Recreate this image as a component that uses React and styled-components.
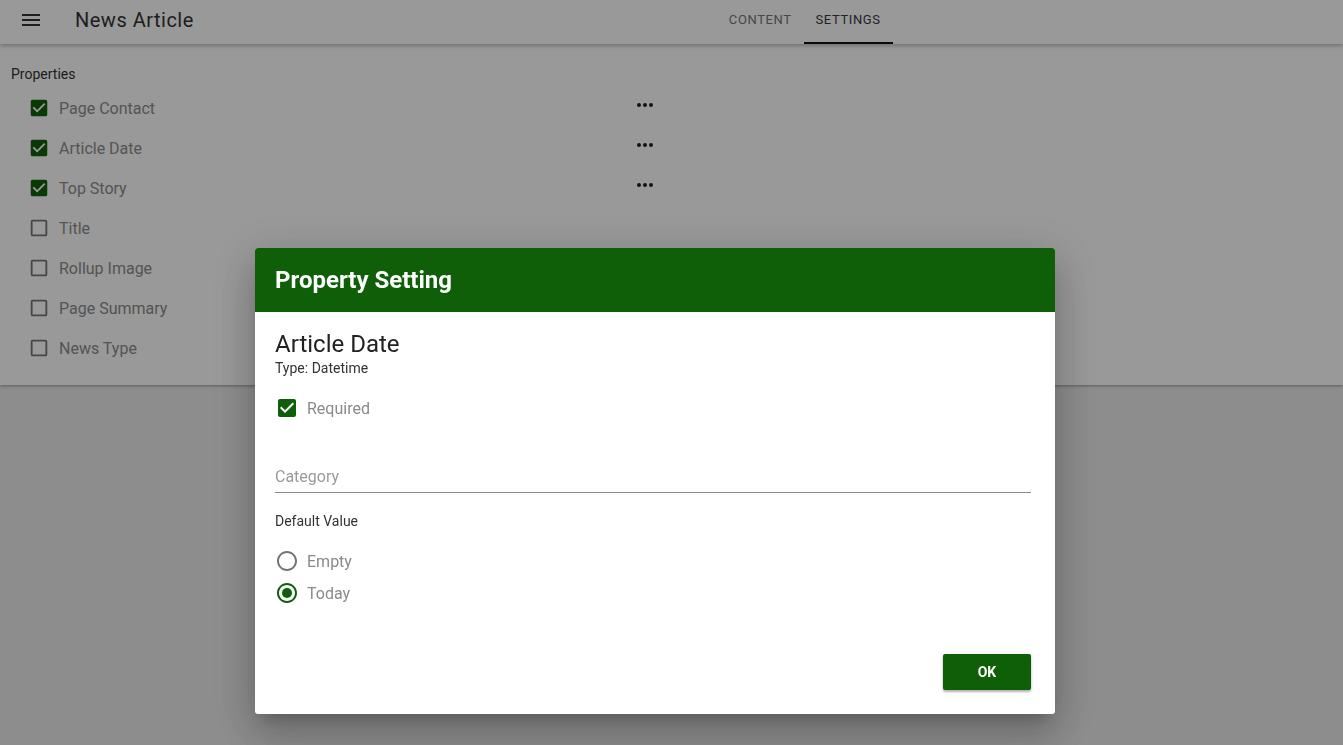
import React from 'react'
import styled, { createGlobalStyle } from 'styled-components'

const GlobalStyle = createGlobalStyle`
  html, body {
    margin: 0;
    padding: 0;
    background: #ebebeb;
    font-family: Roboto, "Liberation Sans", sans-serif;
  }
`

const GREEN = '#0f5f08'

const Page = styled.div`
  width: 1343px;
  height: 745px;
  overflow: hidden;
  background: #ebebeb;
`

const AppBar = styled.header`
  height: 44px;
  display: flex;
  align-items: center;
  background: #fff;
  box-shadow: 0 2px 4px rgba(0, 0, 0, 0.25);
  position: relative;
  z-index: 1;
`

const MenuButton = styled.div`
  width: 18px;
  margin: 0 0 4px 22px;
  display: flex;
  flex-direction: column;
  gap: 3px;
  span {
    display: block;
    height: 2px;
    background: #333;
  }
`

const AppTitle = styled.h1`
  margin: 0 0 4px 35px;
  font-size: 20px;
  font-weight: 400;
  letter-spacing: 0.5px;
  color: #333;
`

const Tabs = styled.nav`
  display: flex;
  height: 44px;
  margin-left: 523px;
`

const Tab = styled.div`
  display: flex;
  align-items: center;
  padding: 0 12px 3px;
  font-size: 13px;
  letter-spacing: 0.6px;
  text-transform: uppercase;
  color: ${p => (p.active ? '#3a3a3a' : '#777')};
  border-bottom: 2px solid ${p => (p.active ? '#111' : 'transparent')};
  box-sizing: border-box;
`

const Panel = styled.section`
  background: #fff;
  height: 341px;
  box-sizing: border-box;
  padding: 22px 0 0 11px;
  box-shadow: 0 1px 3px rgba(0, 0, 0, 0.35);
`

const SectionLabel = styled.div`
  font-size: 14px;
  line-height: 17px;
  color: #333;
  margin-bottom: 5px;
`

const PropRow = styled.div`
  display: flex;
  align-items: center;
  height: 40px;
  width: 625px;
  padding-left: 17px;
`

const PropLabel = styled.span`
  flex: 1;
  font-size: 16px;
  color: #8c8c8c;
  margin-left: 9px;
`

const Dots = styled.svg`
  width: 16px;
  height: 4px;
  margin-bottom: 6px;
`

const Overlay = styled.div`
  position: fixed;
  inset: 0;
  background: rgba(0, 0, 0, 0.4);
  padding: 248px 0 0 255px;
  box-sizing: border-box;
  z-index: 10;
`

const Dialog = styled.div`
  width: 800px;
  background: #fff;
  border-radius: 3px;
  overflow: hidden;
  box-shadow: 0 11px 15px -7px rgba(0, 0, 0, 0.2), 0 24px 38px 3px rgba(0, 0, 0, 0.14),
    0 9px 46px 8px rgba(0, 0, 0, 0.12);
`

const DialogHeader = styled.div`
  height: 64px;
  background: ${GREEN};
  color: #fff;
  display: flex;
  align-items: center;
  padding-left: 20px;
  font-size: 24px;
  font-weight: 700;
`

const DialogBody = styled.div`
  padding: 19px 24px 24px 20px;
  display: flex;
  flex-direction: column;
`

const FieldName = styled.div`
  font-size: 24px;
  line-height: 26px;
  color: #222;
`

const TypeText = styled.div`
  font-size: 14px;
  line-height: 16px;
  color: #333;
  margin-top: 3px;
`

const ControlRow = styled.label`
  display: flex;
  align-items: center;
  height: 24px;
  margin-top: ${p => p.gap || 0}px;
`

const ControlLabel = styled.span`
  font-size: 16px;
  color: #8a8a8a;
  margin-left: 8px;
`

const Input = styled.input`
  margin-top: 40px;
  height: 33px;
  border: none;
  border-bottom: 1px solid #8a8a8a;
  padding: 0;
  font-family: inherit;
  font-size: 16px;
  color: #333;
  outline: none;
  box-sizing: border-box;
  &::placeholder {
    color: #9a9a9a;
  }
`

const SubHeading = styled.div`
  font-size: 14px;
  line-height: 16px;
  color: #333;
  margin-top: 20px;
`

const Actions = styled.div`
  display: flex;
  justify-content: flex-end;
  margin-top: 49px;
`

const OkButton = styled.button`
  width: 88px;
  height: 36px;
  border: none;
  border-radius: 2px;
  background: ${GREEN};
  color: #fff;
  font-family: inherit;
  font-weight: 700;
  font-size: 14px;
  box-shadow: 0 2px 2px rgba(0, 0, 0, 0.24), 0 1px 4px rgba(0, 0, 0, 0.12);
`

const Icon = styled.svg`
  width: ${p => p.size || 24}px;
  height: ${p => p.size || 24}px;
  flex-shrink: 0;
`

const CHECKED =
  'M19 3H5c-1.11 0-2 .9-2 2v14c0 1.1.89 2 2 2h14c1.11 0 2-.9 2-2V5c0-1.1-.89-2-2-2zm-9 14l-5-5 1.41-1.41L10 14.17l7.59-7.59L19 8l-9 9z'
const UNCHECKED =
  'M19 5v14H5V5h14m0-2H5c-1.1 0-2 .9-2 2v14c0 1.1.9 2 2 2h14c1.1 0 2-.9 2-2V5c0-1.1-.9-2-2-2z'
const RING =
  'M12 2C6.48 2 2 6.48 2 12s4.48 10 10 10 10-4.48 10-10S17.52 2 12 2zm0 18c-4.42 0-8-3.58-8-8s3.58-8 8-8 8 3.58 8 8-3.58 8-8 8z'

const Checkbox = ({ checked, size }) => (
  <Icon size={size} viewBox="0 0 24 24">
    {checked && <rect x="5" y="5" width="14" height="14" fill="#fff" />}
    <path d={checked ? CHECKED : UNCHECKED} fill={checked ? GREEN : '#757575'} />
  </Icon>
)

const Radio = ({ checked }) => (
  <Icon viewBox="0 0 24 24">
    <path d={RING} fill={checked ? GREEN : '#757575'} />
    {checked && <circle cx="12" cy="12" r="5" fill={GREEN} />}
  </Icon>
)

const properties = [
  { name: 'Page Contact', on: true },
  { name: 'Article Date', on: true },
  { name: 'Top Story', on: true },
  { name: 'Title', on: false },
  { name: 'Rollup Image', on: false },
  { name: 'Page Summary', on: false },
  { name: 'News Type', on: false },
]

export default function App() {
  return (
    <Page>
      <GlobalStyle />
      <AppBar>
        <MenuButton>
          <span />
          <span />
          <span />
        </MenuButton>
        <AppTitle>News Article</AppTitle>
        <Tabs>
          <Tab>Content</Tab>
          <Tab active>Settings</Tab>
        </Tabs>
      </AppBar>

      <Panel>
        <SectionLabel>Properties</SectionLabel>
        {properties.map(p => (
          <PropRow key={p.name}>
            <Checkbox checked={p.on} size={22} />
            <PropLabel>{p.name}</PropLabel>
            {p.on && (
              <Dots viewBox="0 0 16 4">
                <circle cx="2" cy="2" r="2" fill="#222" />
                <circle cx="8" cy="2" r="2" fill="#222" />
                <circle cx="14" cy="2" r="2" fill="#222" />
              </Dots>
            )}
          </PropRow>
        ))}
      </Panel>

      <Overlay>
        <Dialog>
          <DialogHeader>Property Setting</DialogHeader>
          <DialogBody>
            <FieldName>Article Date</FieldName>
            <TypeText>Type: Datetime</TypeText>
            <ControlRow gap={20}>
              <Checkbox checked />
              <ControlLabel>Required</ControlLabel>
            </ControlRow>
            <Input placeholder="Category" />
            <SubHeading>Default Value</SubHeading>
            <ControlRow gap={20}>
              <Radio />
              <ControlLabel>Empty</ControlLabel>
            </ControlRow>
            <ControlRow gap={8}>
              <Radio checked />
              <ControlLabel>Today</ControlLabel>
            </ControlRow>
            <Actions>
              <OkButton>OK</OkButton>
            </Actions>
          </DialogBody>
        </Dialog>
      </Overlay>
    </Page>
  )
}
